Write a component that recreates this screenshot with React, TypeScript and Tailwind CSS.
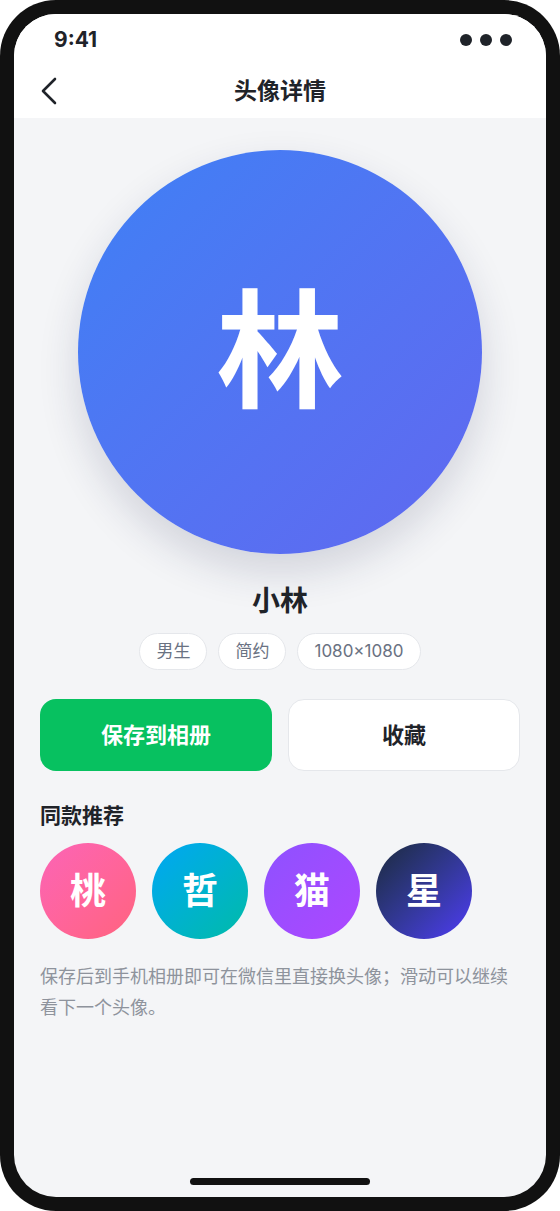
import React from 'react';

const recs = [
  { ch: '桃', cls: 'bg-gradient-to-br from-pink-400 to-rose-400' },
  { ch: '哲', cls: 'bg-gradient-to-br from-sky-500 to-teal-500' },
  { ch: '猫', cls: 'bg-gradient-to-br from-violet-500 to-purple-500' },
  { ch: '星', cls: 'bg-gradient-to-br from-slate-800 to-indigo-600' },
];

const tags = ['男生', '简约', '1080×1080'];

export default function App() {
  return (
    <div
      className="w-[560px] h-[1211px] bg-white"
      style={{ fontFamily: 'Inter, "Noto Sans CJK SC", sans-serif' }}
    >
      <div className="w-full h-full bg-[#111] rounded-[56px] p-[14px]">
        <div className="relative h-full rounded-[42px] overflow-hidden bg-[#f4f5f7] flex flex-col">
          {/* status bar + nav */}
          <div className="bg-white">
            <div className="h-[50px] flex items-center justify-between pl-10 pr-[34px] pt-[2px]">
              <span className="text-[21px] font-bold text-[#1f2329]">9:41</span>
              <div className="flex gap-2">
                <span className="w-3 h-3 rounded-full bg-[#1f2329]" />
                <span className="w-3 h-3 rounded-full bg-[#1f2329]" />
                <span className="w-3 h-3 rounded-full bg-[#1f2329]" />
              </div>
            </div>
            <div className="relative h-[54px] flex items-center justify-center">
              <svg
                className="absolute left-[24px] top-[13px]"
                width="22"
                height="28"
                viewBox="0 0 22 28"
                fill="none"
                stroke="#1f2329"
                strokeWidth="2.6"
                strokeLinecap="round"
                strokeLinejoin="round"
              >
                <path d="M17 2 L5 14 L17 26" />
              </svg>
              <span className="text-[23px] font-bold text-[#1f2329]">头像详情</span>
            </div>
          </div>

          {/* content */}
          <div className="flex flex-col items-center pt-8">
            <div className="w-[404px] h-[404px] rounded-full bg-gradient-to-br from-[#3d80f5] to-[#6068f0] shadow-[0_18px_40px_rgba(30,40,80,0.16)] flex items-center justify-center">
              <span className="text-[128px] font-bold text-white leading-none">林</span>
            </div>
            <div className="mt-[29px] text-[28px] leading-[36px] font-bold text-[#1f2329]">小林</div>
            <div className="mt-[14px] flex gap-[11px]">
              {tags.map((t) => (
                <span
                  key={t}
                  className="h-[37px] px-4 flex items-center rounded-full bg-white border border-gray-200 text-[17px] text-gray-500"
                >
                  {t}
                </span>
              ))}
            </div>
          </div>

          <div className="px-[26px]">
            <div className="mt-[29px] grid grid-cols-2 gap-4">
              <button className="h-[72px] rounded-2xl bg-[#07c160] text-white text-[22px] font-bold">
                保存到相册
              </button>
              <button className="h-[72px] rounded-2xl bg-white border border-gray-200 text-[#1f2329] text-[22px] font-bold">
                收藏
              </button>
            </div>

            <div className="mt-[31px] text-[21px] leading-[28px] font-bold text-[#1f2329]">同款推荐</div>
            <div className="mt-[13px] flex gap-4">
              {recs.map((r) => (
                <div
                  key={r.ch}
                  className={`w-24 h-24 rounded-full flex items-center justify-center ${r.cls}`}
                >
                  <span className="text-[36px] font-bold text-white leading-none">{r.ch}</span>
                </div>
              ))}
            </div>

            <p className="mt-[22px] text-[18px] leading-[31px] text-[#8e939c] whitespace-nowrap">
              保存后到手机相册即可在微信里直接换头像；滑动可以继续
              <br />
              看下一个头像。
            </p>
          </div>

          <div className="absolute bottom-[12px] left-1/2 -translate-x-1/2 w-[180px] h-[7px] rounded-full bg-[#111]" />
        </div>
      </div>
    </div>
  );
}
